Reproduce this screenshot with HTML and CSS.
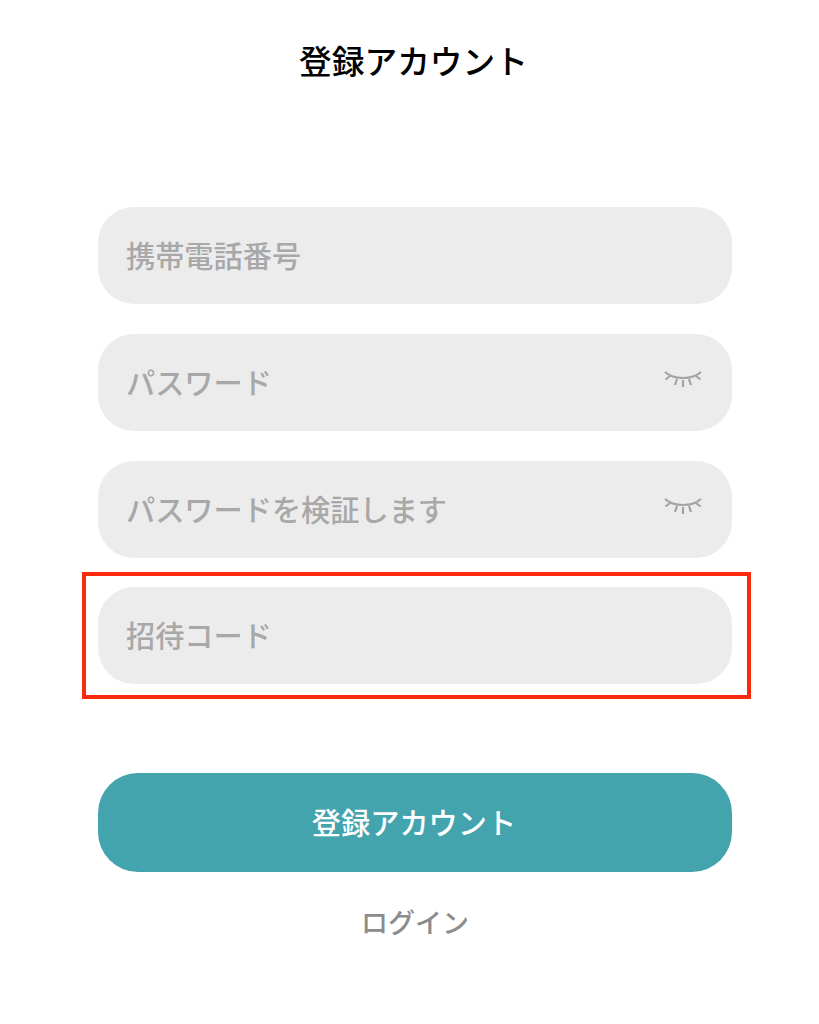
FILE: index.html
```html
<!DOCTYPE html>
<html lang="ja">
<head>
<meta charset="utf-8">
<title>登録アカウント</title>
<link rel="stylesheet" href="styles.css">
</head>
<body>
<main class="page">
  <h1 class="title">登録アカウント</h1>
  <form class="form">
    <div class="field"><span class="placeholder">携帯電話番号</span></div>
    <div class="field"><span class="placeholder">パスワード</span>
      <svg class="eye" viewBox="0 0 38 18"><path d="M1 2C10 10 28 10 37 2M6 6L1.500 9.500M13 9L11 15M19 10V17M25 9L27 15M32 6L36.500 9.500" /></svg></div>
    <div class="field"><span class="placeholder">パスワードを検証します</span>
      <svg class="eye" viewBox="0 0 38 18"><path d="M1 2C10 10 28 10 37 2M6 6L1.500 9.500M13 9L11 15M19 10V17M25 9L27 15M32 6L36.500 9.500" /></svg></div>
    <div class="highlight"><div class="field"><span class="placeholder">招待コード</span></div></div>
    <button type="button" class="submit">登録アカウント</button>
    <a class="login">ログイン</a>
  </form>
</main>
</body>
</html>
```
FILE: styles.css
```css
* { box-sizing: border-box; }
html, body { margin: 0; padding: 0; background: #fff; }
body { font-family: "Noto Sans CJK JP", "Noto Sans", sans-serif; }
.page { width: 819px; height: 1024px; overflow: hidden; }
.title { margin: 0; padding-top: 37px; height: 207px; text-align: center; font-size: 32.700px; line-height: 46px; font-weight: 500; color: #000; padding-left: 8px; }
.form { display: flex; flex-direction: column; align-items: flex-start; padding-left: 98px; }
.field { width: 634px; height: 97px; border-radius: 36px; background: #ececec; display: flex; align-items: center; justify-content: space-between; padding: 0 30px 0 28px; margin-bottom: 30px; }
.placeholder { font-size: 29.200px; color: #a8a8a8; font-weight: 500; margin-bottom: 4px; }
.eye { width: 38px; height: 18px; margin-top: -8px; fill: none; stroke: #a3a3a3; stroke-width: 2.200; }
.highlight { margin: -16px 0 0 -16px; width: 669px; height: 127px; border: 4px solid #fb2a0c; padding: 11px 0 0 12px; flex: none; }
.highlight .field { margin: 0; }
.submit { margin-top: 74px; width: 634px; height: 99px; border: none; border-radius: 40px; background: #43a4ae; color: #fff; font: inherit; font-size: 29.200px; font-weight: 500; padding: 0 2px 3px 0; }
.login { width: 634px; text-align: center; margin-top: 30px; font-size: 27px; font-weight: 500; color: #8c8c8c; }
```
